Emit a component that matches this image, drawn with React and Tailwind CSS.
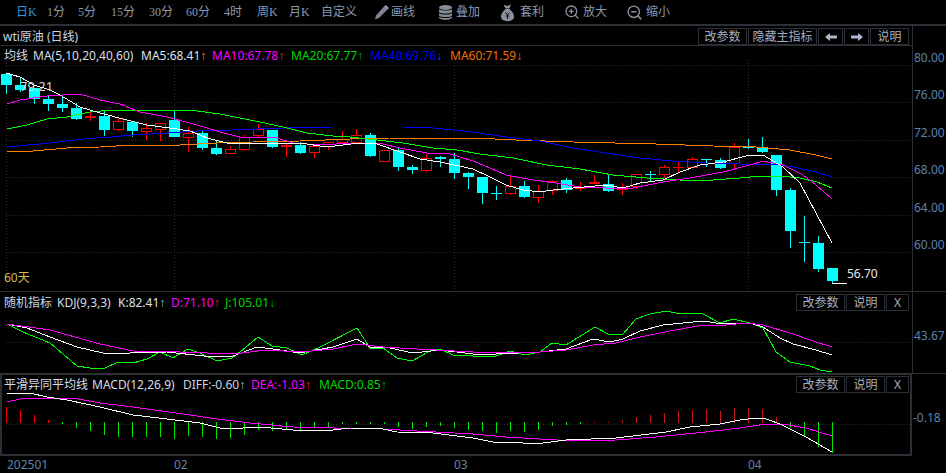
import React from 'react';
import { ZoomIn, ZoomOut } from 'lucide-react';

const CJK = { fontFamily: '"Noto Sans", "Noto Sans CJK SC", sans-serif' };
const TOOL_FONT = { fontFamily: '"Liberation Serif", "Noto Sans CJK SC", serif' };

// Candles in page pixels: [bodyTop, bodyBottom, wickTop, wickBottom, kind]
// kind: c = cyan filled, h = red hollow, r = red solid
const CANDLES = [
  [74, 85, 73, 94, 'c'], [85, 90, 78, 92, 'c'], [88, 99, 88, 104, 'c'], [99, 104, 96, 111, 'c'],
  [104, 108, 97, 112, 'c'], [108, 119, 103, 120, 'c'], [116, 118, 110, 121, 'r'], [116, 130, 110, 136, 'c'],
  [121, 129, 118, 131, 'h'], [122, 131, 121, 137, 'c'], [128, 131, 123, 140, 'h'], [123, 129, 123, 141, 'h'],
  [120, 137, 111, 137, 'c'], [133, 137, 127, 152, 'h'], [133, 148, 131, 150, 'c'], [148, 154, 141, 155, 'c'],
  [149, 153, 146, 154, 'h'], [137, 149, 135, 151, 'h'], [129, 135, 124, 137, 'h'], [130, 147, 130, 148, 'c'],
  [145, 147, 144, 157, 'r'], [145, 153, 142, 154, 'c'], [146, 152, 144, 158, 'h'], [142, 146, 142, 150, 'h'],
  [139, 142, 131, 143, 'h'], [135, 142, 129, 143, 'h'], [135, 156, 133, 157, 'c'], [150, 161, 150, 161, 'h'],
  [150, 167, 147, 171, 'c'], [167, 170, 165, 174, 'c'], [158, 170, 154, 172, 'h'], [157, 159, 156, 167, 'c'],
  [159, 173, 153, 179, 'c'], [173, 177, 172, 189, 'c'], [177, 193, 177, 204, 'c'], [193, 194, 186, 200, 'c'],
  [186, 193, 175, 195, 'h'], [186, 197, 181, 198, 'c'], [191, 197, 185, 203, 'h'], [181, 190, 180, 195, 'h'],
  [180, 190, 178, 193, 'c'], [187, 188, 182, 191, 'h'], [182, 184, 175, 184, 'r'], [184, 191, 175, 192, 'c'],
  [187, 189, 183, 195, 'h'], [174, 186, 174, 189, 'h'], [174, 175, 171, 182, 'c'], [167, 174, 165, 178, 'h'],
  [167, 168, 162, 173, 'r'], [159, 167, 157, 168, 'h'], [159, 160, 159, 167, 'c'], [160, 168, 158, 169, 'c'],
  [147, 163, 143, 168, 'h'], [147, 148, 139, 149, 'c'], [147, 152, 137, 153, 'c'], [155, 190, 155, 196, 'c'],
  [190, 231, 188, 248, 'c'], [242, 243, 216, 262, 'c'], [243, 269, 236, 272, 'c'], [268, 281, 268, 283, 'c'],
];

const MA5 = '6,73 20,77 34,85 50,90 60,95 80,107 100,113 127,120 147,125 170,128 190,131 207,138 227,143 253,143 277,143 300,143 327,147 343,145 360,143 377,144 400,152 420,159 440,162 473,169 490,177 506,185 523,190 540,192 553,190 573,188 606,185 623,188 640,183 663,180 680,172 700,165 723,162 750,155 763,155 783,167 800,183 816,213 832,243';
const MA10 = '7,104 20,100 47,96 80,94 100,100 120,104 140,112 167,117 190,123 207,128 220,132 240,137 253,137 277,138 293,143 320,145 353,143 383,144 400,148 427,153 447,153 473,161 490,168 506,175 533,180 556,183 580,187 606,188 633,188 663,182 690,178 723,172 750,165 763,161 783,165 803,175 816,185 832,199';
const MA20 = '7,129 27,125 47,119 67,117 90,112 113,110 167,110 197,111 220,114 240,118 260,122 283,127 307,133 333,136 350,137 377,140 403,143 433,148 457,150 480,154 513,158 547,165 580,169 613,175 647,178 680,180 713,180 740,178 760,176 780,176 800,178 817,182 832,188';
const MA40 = '7,147 50,143 83,139 110,137 133,135 167,133 197,131 233,130 283,128 333,127 403,127 433,128 473,132 506,137 540,141 573,148 606,153 640,158 673,161 706,163 740,164 773,164 793,167 816,172 832,177';
const MA60 = '7,152 33,151 67,148 100,147 133,145 180,145 217,143 253,142 300,141 350,139 390,138 473,138 516,140 573,142 656,144 713,146 756,147 790,150 816,155 832,159';

const KDJ_K = '7,324 27,328 50,337 77,347 103,353 130,353 167,352 213,357 233,356 257,347 273,349 300,353 333,347 357,339 370,347 390,348 413,353 440,350 473,354 496,354 540,352 566,349 593,339 610,342 623,339 640,331 663,325 703,321 723,324 750,323 763,327 780,338 793,344 816,350 832,355';
const KDJ_D = '7,324 50,330 100,344 133,351 180,352 233,354 267,350 300,352 333,349 357,344 383,347 417,349 473,352 506,352 540,352 566,350 593,345 616,343 640,337 670,331 703,325 726,325 746,323 763,325 790,333 813,341 832,347';
const KDJ_J = '7,324 23,332 50,343 77,366 90,368 105,368 118,362 133,363 147,359 160,352 173,358 188,349 200,353 217,361 232,358 240,352 258,337 272,346 287,348 302,355 320,347 357,328 370,348 383,348 397,358 412,361 430,351 440,349 453,355 473,356 496,356 510,351 525,355 540,352 552,343 566,345 595,327 608,334 623,334 636,319 650,314 666,311 676,313 703,314 720,323 733,319 750,323 763,328 776,352 790,362 810,366 820,370 832,372';

const DIFF = '7,393 30,393 47,397 67,400 100,407 133,415 167,419 200,423 220,428 243,428 260,427 293,430 333,430 350,428 383,429 397,432 433,433 473,438 493,442 523,443 543,443 566,440 616,438 666,432 690,427 720,424 740,420 756,418 766,419 780,424 806,437 832,452';
const DEA = '7,402 20,399 47,398 73,398 100,403 133,407 183,414 217,419 250,423 293,427 333,428 383,429 417,431 473,434 506,437 540,439 573,441 616,440 656,437 706,432 740,428 766,424 783,424 806,428 832,436';

// MACD bar end y, bars start from the zero line at 423
const MACD_BARS = [
  407, 410, 415, 420, 424, 428, 431, 435, 437, 437, 437, 437, 439, 436, 437, 439, 438, 435, 430, 431,
  430, 430, 428, 427, 424, 424, 424, 424, 427, 429, 427, 426, 428, 430, 431, 433, 431, 432, 430, 426,
  425, 424, 422, 422, 420, 417, 415, 413, 411, 410, 409, 411, 408, 408, 409, 417, 428, 437, 447, 453,
];

const barX = (i) => 6.5 + 14 * i;

function Line({ points, color }) {
  return <polyline points={points} fill="none" stroke={color} strokeWidth="1" shapeRendering="crispEdges" />;
}

function Dotted({ x1, y1, x2, y2 }) {
  return <line x1={x1} y1={y1} x2={x2} y2={y2} stroke="#2a2c30" strokeWidth="1" strokeDasharray="1 2" shapeRendering="crispEdges" />;
}

function Candle({ candle, i }) {
  const [top, bottom, wickTop, wickBottom, kind] = candle;
  const x = barX(i);
  const color = kind === 'c' ? '#00ffff' : '#ff0000';
  return (
    <g shapeRendering="crispEdges">
      <line x1={x} y1={wickTop} x2={x} y2={wickBottom} stroke={color} />
      {kind === 'h' ? (
        <rect x={x - 5} y={top + 0.5} width="10" height={bottom - top} fill="#000" stroke={color} />
      ) : (
        <rect x={x - 5.5} y={top} width="11" height={bottom - top} fill={color} />
      )}
    </g>
  );
}

function PanelButton({ className, children }) {
  return (
    <div className={`flex items-center justify-center border border-[#2c3036] text-[#a3b0c4] text-[12px] h-full ${className}`}>
      {children}
    </div>
  );
}

function PanelButtons() {
  return (
    <div className="flex h-[17px] gap-px">
      <PanelButton className="w-[49px]">改参数</PanelButton>
      <PanelButton className="w-[39px]">说明</PanelButton>
      <PanelButton className="w-[23px]">X</PanelButton>
    </div>
  );
}

// Arrows are narrow in the reference, Liberation's glyph is closest
function Value({ color, arrow, arrowColor, className, children }) {
  return (
    <span className={`whitespace-nowrap ${className}`} style={{ color }}>
      {children}
      <span style={{ color: arrowColor, fontFamily: '"Liberation Sans", sans-serif' }}>{arrow}</span>
    </span>
  );
}

function PenIcon() {
  return (
    <svg width="15" height="15" viewBox="0 0 15 15">
      <path d="M10.5 1 14 4 5 13 1 14.5 2 10.5Z" fill="#7d8490" />
      <path d="M11.5 0 15 3 14 4.2 10.5 1.2Z" fill="#a3a9b3" />
    </svg>
  );
}

function StackIcon() {
  return (
    <svg width="13" height="15" viewBox="0 0 13 15" fill="#858b96">
      <ellipse cx="6.5" cy="2.5" rx="6.5" ry="2.5" />
      <path d="M0 4.2C1 6 12 6 13 4.2V7C12 9 1 9 0 7Z" />
      <path d="M0 8C1 10 12 10 13 8V10.5C12 12.5 1 12.5 0 10.5Z" />
      <path d="M0 11.5C1 13.5 12 13.5 13 11.5V12.8C12 15.5 1 15.5 0 12.8Z" />
    </svg>
  );
}

function BagIcon() {
  return (
    <svg width="13" height="17" viewBox="0 0 13 17">
      <path d="M2.5 0.5 6 2 10 0.5 8.5 4.5H4.5Z" fill="#8b919c" />
      <path d="M4.5 5H8.5C11 7 13 10 13 12.5 13 15.5 10.5 17 6.5 17 2.5 17 0 15.5 0 12.5 0 10 2 7 4.5 5Z" fill="#8b919c" />
      <path d="M4.5 8.5 6.5 11 8.5 8.5M6.5 11V15M4.7 12H8.3" fill="none" stroke="#111" strokeWidth="1" />
    </svg>
  );
}

const TOOLS = [
  { label: '日', suffix: 'K', className: 'w-[31px] text-[#2f97e0]' },
  { label: '1分', className: 'w-[31px]' },
  { label: '5分', className: 'w-[33px]' },
  { label: '15分', className: 'w-[38px]' },
  { label: '30分', className: 'w-[37px]' },
  { label: '60分', className: 'w-[38px]' },
  { label: '4时', className: 'w-[33px]' },
  { label: '周', suffix: 'K', className: 'w-[32px]' },
  { label: '月', suffix: 'K', className: 'w-[32px]' },
  { label: '自定义', className: 'w-[53px]' },
];

function Toolbar() {
  return (
    <div className="flex items-center h-[24px] pl-[16px] text-[12px] text-[#8b98ae]" style={TOOL_FONT}>
      {TOOLS.map((t) => (
        <span key={t.label} className={`whitespace-nowrap ${t.className}`}>
          {t.label}
          {t.suffix}
        </span>
      ))}
      <span className="flex items-center gap-[2px] w-[65px]"><PenIcon />画线</span>
      <span className="flex items-center gap-[4px] w-[62px]"><StackIcon />叠加</span>
      <span className="flex items-center gap-[6px] w-[63px]"><BagIcon />套利</span>
      <span className="flex items-center gap-[3px] w-[62px]"><ZoomIn size={16} color="#8b919c" />放大</span>
      <span className="flex items-center gap-[3px]"><ZoomOut size={17} color="#8b919c" />缩小</span>
    </div>
  );
}

function MainChart() {
  return (
    <div className="relative h-[245px]">
      <svg className="block" width="912" height="245" viewBox="0 46 912 245">
        {[65, 102, 140, 177, 215, 252].map((y) => (
          <Dotted key={y} x1={6} y1={y + 0.5} x2={912} y2={y + 0.5} />
        ))}
        {[6, 174, 454, 748].map((x) => (
          <Dotted key={x} x1={x + 0.5} y1={60} x2={x + 0.5} y2={291} />
        ))}
        {CANDLES.map((c, i) => (
          <Candle key={i} candle={c} i={i} />
        ))}
        <Line points={MA60} color="#ff8000" />
        <Line points={MA40} color="#0000ff" />
        <Line points={MA20} color="#00ff00" />
        <Line points={MA10} color="#ff00ff" />
        <Line points={MA5} color="#ffffff" />
        <line x1="832" y1="283.5" x2="847" y2="283.5" stroke="#fff" shapeRendering="crispEdges" />
      </svg>
      <div className="absolute left-[4px] top-0 h-[19px] flex items-center text-[12px]" style={CJK}>
        <span className="w-[29px] text-[#d5dde8] whitespace-nowrap">均线</span>
        <span className="w-[108px] text-[#d5dde8] whitespace-nowrap">MA(5,10,20,40,60)</span>
        <Value className="w-[71px]" color="#dde3ea" arrow="↑" arrowColor="#e0a060">MA5:68.41</Value>
        <Value className="w-[79px]" color="#ff00ff" arrow="↑" arrowColor="#ff2020">MA10:67.78</Value>
        <Value className="w-[79px]" color="#00d800" arrow="↑" arrowColor="#00b000">MA20:67.77</Value>
        <Value className="w-[80px]" color="#0000ff" arrow="↓" arrowColor="#2040ff">MA40:69.76</Value>
        <Value color="#f07000" arrow="↓" arrowColor="#ff6000">MA60:71.59</Value>
      </div>
      <span className="absolute left-[20px] top-[31px] text-[13px] text-[#d8d8d8]" style={CJK}>79.21</span>
      <span className="absolute left-[847px] top-[219px] text-[12px] text-[#e8e8e8]" style={CJK}>56.70</span>
      <span className="absolute left-[4px] top-[223px] text-[12px] text-[#d8b850]" style={CJK}>60天</span>
    </div>
  );
}

function KdjPanel() {
  return (
    <div className="relative h-[81px]">
      <svg className="block" width="912" height="81" viewBox="0 292 912 81">
        <Dotted x1={6} y1={342.5} x2={912} y2={342.5} />
        <Line points={KDJ_J} color="#00ff00" />
        <Line points={KDJ_K} color="#ffffff" />
        <Line points={KDJ_D} color="#ff00ff" />
      </svg>
      <div className="absolute inset-x-0 top-0 flex items-start justify-between pl-[4px] pr-[3px] pt-[2px] text-[12px]" style={CJK}>
        <div className="flex h-[17px] items-center">
          <span className="w-[53px] text-[#c9d6e6] whitespace-nowrap">随机指标</span>
          <span className="w-[61px] text-[#d5dde8] whitespace-nowrap">KDJ(9,3,3)</span>
          <Value className="w-[53px]" color="#dde3ea" arrow="↑" arrowColor="#a8c0dc">K:82.41</Value>
          <Value className="w-[54px]" color="#ff00ff" arrow="↑" arrowColor="#ff2020">D:71.10</Value>
          <Value color="#00d800" arrow="↓" arrowColor="#00b000">J:105.01</Value>
        </div>
        <PanelButtons />
      </div>
    </div>
  );
}

function MacdPanel() {
  return (
    <div className="relative h-[83px] border-2 border-[#2c3036]">
      <svg className="block" width="908" height="79" viewBox="2 375 908 79">
        <Dotted x1={6} y1={424.5} x2={910} y2={424.5} />
        {MACD_BARS.map((end, i) => {
          const up = end < 423;
          return (
            <line
              key={i}
              x1={barX(i)}
              x2={barX(i)}
              y1={up ? 423 : 422}
              y2={end}
              stroke={up ? (i < 4 ? '#ff0000' : '#c81818') : '#00e800'}
              shapeRendering="crispEdges"
            />
          );
        })}
        <Line points={DEA} color="#ff00ff" />
        <Line points={DIFF} color="#ffffff" />
      </svg>
      <div className="absolute inset-x-0 top-0 flex items-start justify-between pl-[2px] pr-[1px] pt-px text-[12px]" style={CJK}>
        <div className="flex h-[17px] items-center">
          <span className="w-[88px] text-[#d5dde8] whitespace-nowrap">平滑异同平均线</span>
          <span className="w-[91px] text-[#d5dde8] whitespace-nowrap">MACD(12,26,9)</span>
          <Value className="w-[68px]" color="#c9d6e6" arrow="↑" arrowColor="#a8c0dc">DIFF:-0.60</Value>
          <Value className="w-[68px]" color="#ff00ff" arrow="↑" arrowColor="#ff2020">DEA:-1.03</Value>
          <Value color="#00d800" arrow="↑" arrowColor="#00b000">MACD:0.85</Value>
        </div>
        <PanelButtons />
      </div>
    </div>
  );
}

export default function App() {
  return (
    <div className="w-[946px] h-[473px] bg-black overflow-hidden" style={CJK}>
      <Toolbar />
      <div className="h-[2px] bg-[#2c3036]" />

      <div className="flex">
        <div className="w-[912px] h-[20px] flex items-start justify-between border-b border-[#2c3036] pl-[3px] pr-[3px] pt-[2px]">
          <span className="text-[12px] text-[#c9d6e6] whitespace-nowrap">wti原油 (日线)</span>
          <div className="flex h-[17px] gap-px">
            <PanelButton className="w-[49px]">改参数</PanelButton>
            <PanelButton className="w-[69px]">隐藏主指标</PanelButton>
            <PanelButton className="w-[25px]">
              <svg width="12" height="8" viewBox="0 0 12 8"><path d="M0 4 5 0V2.5H12V5.5H5V8Z" fill="#a9b8cc" /></svg>
            </PanelButton>
            <PanelButton className="w-[25px]">
              <svg width="12" height="8" viewBox="0 0 12 8"><path d="M12 4 7 0V2.5H0V5.5H7V8Z" fill="#a9b8cc" /></svg>
            </PanelButton>
            <PanelButton className="w-[39px]">说明</PanelButton>
          </div>
        </div>
        <div className="flex-1 border-l border-[#2c3036]" />
      </div>

      <div className="flex border-b border-[#2c3036]">
        <div className="w-[912px]"><MainChart /></div>
        <div className="flex-1 flex flex-col border-l border-[#2c3036] pt-[4px] text-[12px] text-[#5f82ad]">
          {['80.00', '76.00', '72.00', '68.00', '64.00', '60.00'].map((v) => (
            <span key={v} className="h-[37.4px] leading-[16px] pl-px">{v}</span>
          ))}
        </div>
      </div>

      <div className="flex">
        <div className="w-[912px]"><KdjPanel /></div>
        <div className="flex-1 border-l border-[#2c3036] pt-[36px] pl-px text-[12px] leading-[16px] text-[#5f82ad]">43.67</div>
      </div>

      <div className="flex">
        <div className="w-[912px]"><MacdPanel /></div>
        <div className="flex-1 h-[81px] border-t border-[#2c3036] pt-[36px] pl-px text-[12px] leading-[16px] text-[#5f82ad]">-0.18</div>
      </div>

      <div className="flex items-center h-[17px] pl-[7px] text-[12px] text-[#5f82ad]">
        <span className="w-[167px]">202501</span>
        <span className="w-[280px]">02</span>
        <span className="w-[294px]">03</span>
        <span>04</span>
      </div>
    </div>
  );
}
